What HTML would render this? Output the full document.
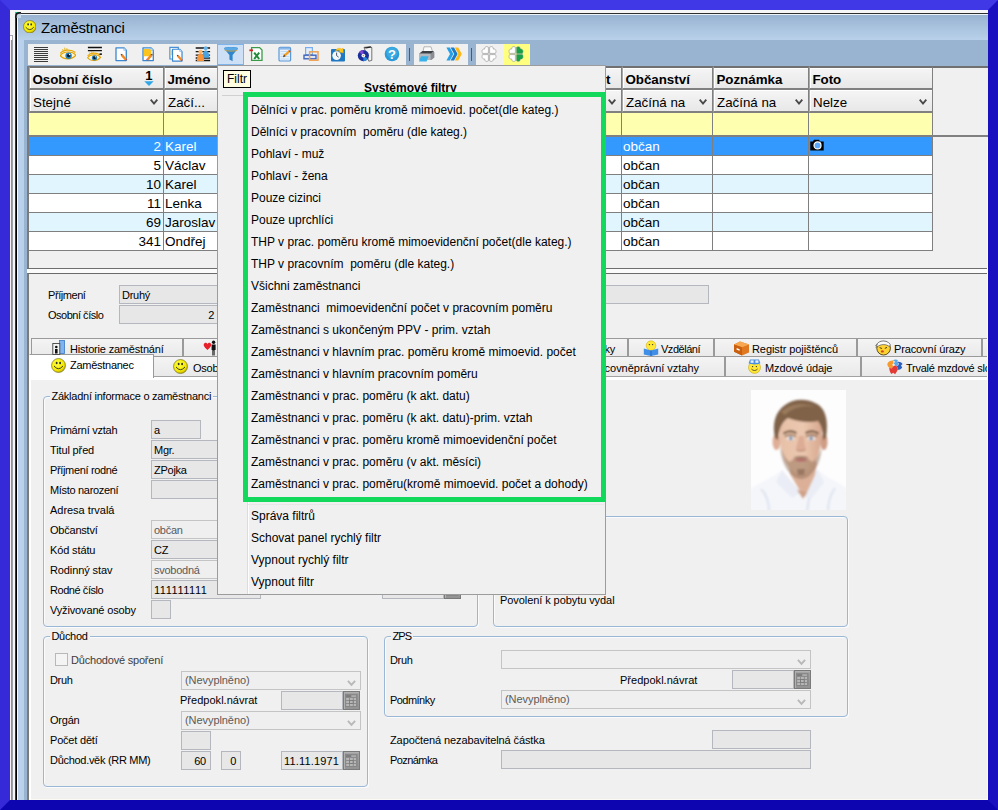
<!DOCTYPE html>
<html lang="cs">
<head>
<meta charset="utf-8">
<title>Zaměstnanci</title>
<style>
html,body{margin:0;padding:0}
body{width:998px;height:810px;position:relative;overflow:hidden;background:#f0f0f0;
 font-family:"Liberation Sans","DejaVu Sans",sans-serif;font-size:11px;color:#000}
div,span,svg{position:absolute;box-sizing:border-box}
.t{white-space:nowrap;line-height:1}
/* frame */
#frame{left:0;top:0;width:998px;height:810px;border-style:solid;border-width:10px;
 border-color:#4038e6 #1a10c0 #0c05b0 #3529d8;z-index:50;pointer-events:none}
#edgeR{left:987px;top:138px;width:1px;height:662px;background:#fbfbf3;z-index:49}
#edgeB{left:30px;top:799px;width:958px;height:1px;background:#fbfbf3;z-index:49}
/* outer window chrome */
#lwhite{left:10px;top:10px;width:6px;height:790px;background:#f6f6f6}
#twhite{left:10px;top:10px;width:978px;height:3px;background:#f6f6f6}
#lgrey{left:11px;top:39.5px;width:2px;height:761px;background:linear-gradient(90deg,#858a92,#a8acb2)}
#lfrag{left:10px;top:35px;width:3px;height:5px;background:#fff;border-top:1px solid #a4a8ae;border-right:1px solid #a4a8ae}
#lblack{left:15.2px;top:14px;width:1.9px;height:786px;background:linear-gradient(90deg,#6a6a6a,#000 55%)}
#lwl{left:17px;top:15px;width:1px;height:785px;background:#f6fafe;z-index:2}
#tblack{left:17px;top:12.6px;width:971px;height:1.6px;background:#2e2e2e}
#twhl{left:18px;top:14px;width:970px;height:1px;background:#eef4fa}
#corner{left:15.2px;top:12.4px;width:6px;height:6px;overflow:hidden;z-index:3}
#title{left:17px;top:15px;width:971px;height:25px;background:linear-gradient(#98b3d1,#b9d1ea)}
#lblue{left:17px;top:40px;width:7px;height:760px;background:#b9d1ea}
#dblue{left:24px;top:40px;width:964px;height:27px;background:#99b4d1}
#dblue2{left:24px;top:40px;width:4px;height:760px;background:#99b4d1}
#ttl{left:41px;top:20px;font-size:15px;letter-spacing:-0.2px}
.gh{background:linear-gradient(#f5f5f5,#e8e8e8);border:0 solid #808080;border-right-width:1px;border-left:1px solid #a8a8a8;box-shadow:inset 1px 1px 0 #fff}
.gr{font-size:13.5px}
.ghb{font-size:13.33px;font-weight:bold}
.ghf{font-size:13.33px}
.lb{font-size:11px;letter-spacing:-0.25px}
.gy{color:#5a5a5a}
.dk{color:#3c3c3c}
.in{background:#e7e7e7;border:1px solid #b4b8be}
.cb{background:#efefef;border:1px solid #c4c4c4}
.grp{border:1px solid #9bb7d6;border-radius:4px;box-shadow:inset 1px 1px 0 #fbfbfb,1px 1px 0 #fbfbfb}
.gt{background:#f0f0f0;padding:0 2px;margin-left:-1px}
.tab{background:linear-gradient(#f4f4f4,#e9e9e9);border:1px solid #9a9a9a;border-bottom:none}
.tabs{background:#fff;border:1px solid #9a9a9a;border-bottom:none;border-left-color:#fff}
.mi{font-size:12px;white-space:pre}
.mh{font-size:12px;font-weight:bold}

</style>
</head>
<body>
<div id="lwhite"></div><div id="twhite"></div><div id="lgrey"></div><div id="lfrag"></div>
<div id="lblack"></div><div id="lwl"></div><div id="tblack"></div><div id="twhl"></div>
<svg id="corner" width="6" height="6" viewBox="0 0 6 6"><rect width="6" height="6" fill="#00e2a4"/><path d="M0.900 6V4Q0.900 0.900 4 0.900H6V6Z" fill="#c6d8ec"/><path d="M0.900 6V4.500Q0.900 0.900 4.500 0.900H6" stroke="#1c1c1c" stroke-width="1.700" fill="none"/></svg>
<div id="title"></div><div id="lblue"></div><div id="dblue"></div><div id="dblue2"></div>
<svg id="smT" style="left:22.800px;top:19.700px" width="13.500" height="13.500" viewBox="0 0 14 14"><use href="#smiley"/></svg>
<span class="t" id="ttl">Zaměstnanci</span>

<div id="tb1" style="left:28px;top:44px;width:378px;height:21px;background:#f0f0f0"></div>
<div id="tb2" style="left:414px;top:44px;width:54px;height:21px;background:#f0f0f0"></div>
<div id="tb3" style="left:476px;top:44px;width:54px;height:21px;background:#f0f0f0"></div>
<div style="left:503px;top:44px;width:27px;height:21px;background:#ffff80"></div>
<div style="left:409px;top:48px;width:1px;height:13px;background:#4a5a70"></div>
<div style="left:471px;top:48px;width:1px;height:13px;background:#4a5a70"></div>
<div id="tbact" style="left:217px;top:44px;width:27px;height:21px;background:#cde0f5;border:1px solid #7eb4ea"></div>
<!-- 1 lines -->
<svg class="ic" style="left:33px;top:46px" width="16" height="16" viewBox="0 0 16 16"><path d="M1 1.5h14M1 3.5h14M1 5.5h14M1 7.5h14M1 9.5h14M1 11.5h14M1 13.5h14M1 15.5h14" stroke="#3c3c3c" stroke-width="1"/></svg>
<!-- 2 eye -->
<svg class="ic" style="left:60px;top:46px" width="16" height="16" viewBox="0 0 16 16"><use href="#eye"/></svg>
<!-- 3 eye + lines -->
<svg class="ic" style="left:87px;top:46px" width="16" height="16" viewBox="0 0 16 16"><g transform="translate(0.300,3.700) scale(0.840)"><use href="#eye"/></g><path d="M0.900 1.500h14M0.900 4.600h14" stroke="#111" stroke-width="1.300"/><rect x="12.500" y="7.300" width="2.400" height="1.700" fill="#222"/></svg>
<!-- 4 doc pencil -->
<svg class="ic" style="left:114px;top:46px" width="16" height="16" viewBox="0 0 16 16"><use href="#doc"/><use href="#pencil"/></svg>
<!-- 5 doc yellow -->
<svg class="ic" style="left:141px;top:46px" width="16" height="16" viewBox="0 0 16 16"><use href="#doc"/><path d="M3 3h5.800l1.600 1.600v5.600H3z" fill="#fcc41c"/><g transform="translate(18.300,0) scale(-1,1)"><use href="#pencil"/></g></svg>
<!-- 6 two docs -->
<svg class="ic" style="left:168px;top:46px" width="16" height="16" viewBox="0 0 16 16"><path d="M1.900 1.400h8.400v11.600H1.900z" fill="#fff" stroke="#4a90d4" stroke-width="1.200"/><path d="M2.700 4.200h1.500v5H2.700z" fill="#fcd860"/><g transform="translate(2.700,1.600) scale(0.920)"><use href="#doc"/><use href="#pencil"/></g></svg>
<!-- 7 people -->
<svg class="ic" style="left:195px;top:46px" width="16" height="16" viewBox="0 0 16 16"><path d="M0.700 2h14.400M0.700 5.600h14.400M0.700 9.200h14.400M0.700 12h14.400M0.700 14.500h14.400" stroke="#151515" stroke-width="1.300"/><circle cx="10.700" cy="2.300" r="2" fill="#6ab6ea"/><path d="M7.500 11.800c0-5 1.400-7.200 3.200-7.200s3.600 2.200 3.600 7.200z" fill="#4aa2de"/><circle cx="5.500" cy="5.800" r="2.100" fill="#ffb868"/><path d="M1.900 15c0-5 1.600-7.400 3.600-7.400s3.600 2.400 3.600 7.400z" fill="#f8943a"/></svg>
<!-- 8 funnel -->
<svg class="ic" style="left:223px;top:46px" width="16" height="16" viewBox="0 0 16 16"><path d="M1 2.6c0-2 14-2 14 0L9.6 9v6.200L6.400 13.400V9z" fill="#2f86cc"/><ellipse cx="8" cy="2.700" rx="7" ry="1.700" fill="#5aa8e4"/><path d="M1.6 4.200C4 5.400 12 5.400 14.400 4.200" stroke="#d8a840" stroke-width="0.900" fill="none"/></svg>
<!-- 9 excel -->
<svg class="ic" style="left:249px;top:46px" width="16" height="16" viewBox="0 0 16 16"><path d="M2.6 1.600h8l2.400 2.400v10.400H2.600z" fill="#fff" stroke="#3a9a48" stroke-width="1.300"/><path d="M5.200 6.600l5 6.400M10.200 6.600l-5 6.400" stroke="#1f8a38" stroke-width="2"/><rect x="0.400" y="3.400" width="3.600" height="1.800" fill="#d62020"/></svg>
<!-- 10 notepad -->
<svg class="ic" style="left:277px;top:46px" width="16" height="16" viewBox="0 0 16 16"><rect x="2" y="1.400" width="11.600" height="13.600" rx="1.300" fill="#e8f2fc" stroke="#5a98d8" stroke-width="1.200"/><path d="M3.400 5.500h9M3.400 8h9M3.400 10.500h9M3.400 13h9" stroke="#b4d2f0" stroke-width="0.800"/><rect x="2.600" y="1.600" width="10.400" height="2" fill="#8cb8e8"/><path d="M6 11.200l1-2.600 5.200-4.600 1.500 1.600-5.200 4.700z" fill="#f4a020"/><path d="M6 11.200l1-2.600 1.500 1.700z" fill="#5a3a1a"/><path d="M11.400 4.700l0.800-0.700 1.500 1.600-0.800 0.700z" fill="#d04040"/></svg>
<!-- 11 windows -->
<svg class="ic" style="left:303px;top:46px" width="16" height="16" viewBox="0 0 16 16"><rect x="2.600" y="1.600" width="6.800" height="7" fill="#e4effa" stroke="#78aef0" stroke-width="1.200"/><rect x="1" y="9.200" width="12" height="3.600" fill="#dfe8f8" stroke="#3f64c0" stroke-width="1.400"/><rect x="6.600" y="5.800" width="8.400" height="8.400" fill="none" stroke="#f0a050" stroke-width="1.500"/></svg>
<!-- 12 clock -->
<svg class="ic" style="left:330px;top:46px" width="16" height="16" viewBox="0 0 16 16"><rect x="1" y="3" width="14" height="12.400" rx="1" fill="#1f78c0"/><circle cx="6.600" cy="9.600" r="4.300" fill="#f4f8fc"/><path d="M6.600 6.600v3l2 1.500" stroke="#345" stroke-width="0.900" fill="none"/><path d="M5.400 5.200C6 2 10 1.400 11.600 3.200l1.500-1.200 0.300 5-4.700-0.900 1.400-1.200C9 3.800 7 4 5.400 5.200z" fill="#ffc820" stroke="#e09a00" stroke-width="0.400"/></svg>
<!-- 13 cd -->
<svg class="ic" style="left:357px;top:46px" width="16" height="16" viewBox="0 0 16 16"><path d="M7 1.400l6.600-0.800 1.200 1v12.800l-3 0.800z" fill="#f2f2f2" stroke="#555" stroke-width="0.800"/><path d="M7 1.400l6.600-0.800 1.200 1-6 0.900z" fill="#222"/><circle cx="6.400" cy="9.600" r="5.600" fill="#1a2f9a"/><path d="M6.400 9.600L2 6.200A5.600 5.600 0 0 1 6.400 4z" fill="#7a4ad0"/><path d="M6.400 9.600l4.400 3.400a5.600 5.600 0 0 1-4.400 2.200z" fill="#2a88d8"/><circle cx="6.400" cy="9.600" r="1.900" fill="#f4f4e8"/><circle cx="6.400" cy="9.600" r="0.700" fill="#888"/></svg>
<!-- 14 help -->
<svg class="ic" style="left:384px;top:46px" width="16" height="16" viewBox="0 0 16 16"><circle cx="8" cy="8" r="7.300" fill="#2a9ad8"/><circle cx="8" cy="6.600" r="5.600" fill="#48b4ea" opacity="0.600"/><text x="8" y="12.600" text-anchor="middle" font-family="Liberation Sans, sans-serif" font-weight="bold" font-size="13" fill="#fff">?</text></svg>
<!-- 15 printer -->
<svg class="ic" style="left:418px;top:46px" width="17" height="16" viewBox="0 0 17 16"><path d="M6 0.800h7l1.600 5H5z" fill="#fafafa" stroke="#999" stroke-width="0.700"/><path d="M1.400 7.600L4.600 5h11l0.800 1.400v5.200l-3 2.400H1.400z" fill="#8a8e94"/><path d="M1.400 7.600L4.600 5h11l-3 2.800z" fill="#3c3f44"/><path d="M1.400 7.600h11.200v6.400H1.400z" fill="#b4b8be"/><path d="M3 10.200h7.600l-2 5.200H1z" fill="#38b0e8"/></svg>
<!-- 16 chevrons -->
<svg class="ic" style="left:446px;top:46px" width="16" height="16" viewBox="0 0 16 16"><path d="M0.400 1.400h3.400l3.600 6.600-3.600 6.600H0.400L4 8z" fill="#28a0e8"/><path d="M4.600 1.400H8l3.600 6.600L8 14.600H4.600L8.200 8z" fill="#1c7cc8"/><path d="M8.800 1.400h3.400L15.800 8l-3.600 6.600H8.800L12.400 8z" fill="#fcb814"/></svg>
<!-- 17 clover white -->
<svg class="ic" style="left:481px;top:46px" width="16" height="16" viewBox="0 0 16 16"><use href="#clover" fill="#fff"/></svg>
<!-- 18 clover green -->
<svg class="ic" style="left:508px;top:46px" width="16" height="16" viewBox="0 0 16 16"><use href="#clover" fill="#fff"/><path d="M8.600 7.400V1.200c2.200-1.400 4 0 3.600 1.800 2.400-0.400 3.600 1.800 2.200 4.400zM8.600 8.600v6.200c2.200 1.400 4 0 3.600-1.800 2.400 0.400 3.600-1.800 2.200-4.400z" fill="#18a048"/></svg>

<div id="gridbg" style="left:27px;top:66px;width:961px;height:203px;background:#f0f0f0"></div>
<div style="left:27px;top:66px;width:961px;height:2px;background:#707070"></div>
<div style="left:27px;top:66px;width:2px;height:203px;background:#7b7b7b"></div>
<div class="gh" style="left:29px;top:66px;width:135px;height:24px;border-top:2px solid #707070;border-bottom:2px solid #808080"></div>
<div class="gh" style="left:29px;top:90px;width:135px;height:23px;border-bottom:2px solid #808080"></div>
<div style="left:29px;top:113px;width:135px;height:24px;background:#ffffb0;border-right:1px solid #808080;border-bottom:2px solid #808080"></div>
<div class="gh" style="left:164px;top:66px;width:458px;height:24px;border-top:2px solid #707070;border-bottom:2px solid #808080"></div>
<div class="gh" style="left:164px;top:90px;width:458px;height:23px;border-bottom:2px solid #808080"></div>
<div style="left:164px;top:113px;width:458px;height:24px;background:#ffffb0;border-right:1px solid #808080;border-bottom:2px solid #808080"></div>
<div class="gh" style="left:622px;top:66px;width:91px;height:24px;border-top:2px solid #707070;border-bottom:2px solid #808080"></div>
<div class="gh" style="left:622px;top:90px;width:91px;height:23px;border-bottom:2px solid #808080"></div>
<div style="left:622px;top:113px;width:91px;height:24px;background:#ffffb0;border-right:1px solid #808080;border-bottom:2px solid #808080"></div>
<div class="gh" style="left:713px;top:66px;width:96px;height:24px;border-top:2px solid #707070;border-bottom:2px solid #808080"></div>
<div class="gh" style="left:713px;top:90px;width:96px;height:23px;border-bottom:2px solid #808080"></div>
<div style="left:713px;top:113px;width:96px;height:24px;background:#ffffb0;border-right:1px solid #808080;border-bottom:2px solid #808080"></div>
<div class="gh" style="left:809px;top:66px;width:124px;height:24px;border-top:2px solid #707070;border-bottom:2px solid #808080"></div>
<div class="gh" style="left:809px;top:90px;width:124px;height:23px;border-bottom:2px solid #808080"></div>
<div style="left:809px;top:113px;width:124px;height:24px;background:#ffffb0;border-right:1px solid #808080;border-bottom:2px solid #808080"></div>
<div style="left:29px;top:137px;width:904px;height:19px;background:#3399ff;border-bottom:1px solid #7f7f7f"></div>
<span class="t gr" style="right:837px;top:140px;color:#fff">2</span>
<span class="t gr" style="left:165px;top:140px;color:#fff">Karel</span>
<span class="t gr" style="left:623px;top:140px;color:#fff">občan</span>
<div style="left:29px;top:156px;width:904px;height:19px;background:#fff;border-bottom:1px solid #7f7f7f"></div>
<span class="t gr" style="right:837px;top:159px;color:#000">5</span>
<span class="t gr" style="left:165px;top:159px;color:#000">Václav</span>
<span class="t gr" style="left:623px;top:159px;color:#000">občan</span>
<div style="left:29px;top:175px;width:904px;height:19px;background:#e1f5ff;border-bottom:1px solid #7f7f7f"></div>
<span class="t gr" style="right:837px;top:178px;color:#000">10</span>
<span class="t gr" style="left:165px;top:178px;color:#000">Karel</span>
<span class="t gr" style="left:623px;top:178px;color:#000">občan</span>
<div style="left:29px;top:194px;width:904px;height:19px;background:#fff;border-bottom:1px solid #7f7f7f"></div>
<span class="t gr" style="right:837px;top:197px;color:#000">11</span>
<span class="t gr" style="left:165px;top:197px;color:#000">Lenka</span>
<span class="t gr" style="left:623px;top:197px;color:#000">občan</span>
<div style="left:29px;top:213px;width:904px;height:19px;background:#e1f5ff;border-bottom:1px solid #7f7f7f"></div>
<span class="t gr" style="right:837px;top:216px;color:#000">69</span>
<span class="t gr" style="left:165px;top:216px;color:#000">Jaroslav</span>
<span class="t gr" style="left:623px;top:216px;color:#000">občan</span>
<div style="left:29px;top:232px;width:904px;height:19px;background:#fff;border-bottom:1px solid #7f7f7f"></div>
<span class="t gr" style="right:837px;top:235px;color:#000">341</span>
<span class="t gr" style="left:165px;top:235px;color:#000">Ondřej</span>
<span class="t gr" style="left:623px;top:235px;color:#000">občan</span>
<div style="left:163px;top:136px;width:1px;height:115px;background:#7f7f7f"></div>
<div style="left:621px;top:136px;width:1px;height:115px;background:#7f7f7f"></div>
<div style="left:712px;top:136px;width:1px;height:115px;background:#7f7f7f"></div>
<div style="left:808px;top:136px;width:1px;height:115px;background:#7f7f7f"></div>
<div style="left:932px;top:136px;width:1px;height:115px;background:#7f7f7f"></div>
<div style="left:29px;top:135px;width:959px;height:2px;background:#808080"></div>
<span class="t ghb" style="left:32.4px;top:72.500px">Osobní číslo</span>
<span class="t ghf" style="left:33px;top:95.500px">Stejné</span>
<svg style="left:150px;top:99px" width="8" height="6" viewBox="0 0 8 6"><path d="M0.700 0.700L4 4.600 7.300 0.700" stroke="#484848" stroke-width="1.800" fill="none"/></svg>
<span class="t ghb" style="left:167.4px;top:72.500px">Jméno</span>
<span class="t ghf" style="left:168px;top:95.500px">Začí...</span>
<svg style="left:608px;top:99px" width="8" height="6" viewBox="0 0 8 6"><path d="M0.700 0.700L4 4.600 7.300 0.700" stroke="#484848" stroke-width="1.800" fill="none"/></svg>
<span class="t ghb" style="left:625.4px;top:72.500px">Občanství</span>
<span class="t ghf" style="left:626px;top:95.500px">Začíná na</span>
<svg style="left:699px;top:99px" width="8" height="6" viewBox="0 0 8 6"><path d="M0.700 0.700L4 4.600 7.300 0.700" stroke="#484848" stroke-width="1.800" fill="none"/></svg>
<span class="t ghb" style="left:716.4px;top:72.500px">Poznámka</span>
<span class="t ghf" style="left:717px;top:95.500px">Začíná na</span>
<svg style="left:795px;top:99px" width="8" height="6" viewBox="0 0 8 6"><path d="M0.700 0.700L4 4.600 7.300 0.700" stroke="#484848" stroke-width="1.800" fill="none"/></svg>
<span class="t ghb" style="left:812.4px;top:72.500px">Foto</span>
<span class="t ghf" style="left:813px;top:95.500px">Nelze</span>
<svg style="left:919px;top:99px" width="8" height="6" viewBox="0 0 8 6"><path d="M0.700 0.700L4 4.600 7.300 0.700" stroke="#484848" stroke-width="1.800" fill="none"/></svg>
<span class="t ghb" style="left:606px;top:72.500px">t</span>
<svg style="left:144px;top:70px" width="10" height="17" viewBox="0 0 10 17"><text x="4.800" y="10.300" text-anchor="middle" font-family="Liberation Sans, sans-serif" font-weight="bold" font-size="13" fill="#000">1</text><path d="M0.300 11.200h9.400L5 16z" fill="#2fa6e8"/></svg>
<svg style="left:810px;top:139px" width="14" height="12" viewBox="0 0 14 12"><path d="M0.300 2.600h2.600L4 0.800h5l1.100 1.800h3.600v9H0.300z" fill="#000"/><circle cx="7.500" cy="6.400" r="3.500" fill="#58a8ff" stroke="#fff" stroke-width="1.200"/></svg>
<div style="left:29px;top:251px;width:959px;height:17px;background:#f0f0f0"></div>
<div style="left:27px;top:268px;width:961px;height:1.3px;background:#6e6e6e"></div>
<div style="left:27px;top:269.300px;width:961px;height:3.300px;background:#fbfbfb"></div>

<div id="formbg" style="left:27px;top:272.600px;width:961px;height:528px;background:#f0f0f0;border-top:1.800px solid #6a6a6a;border-left:2px solid #7b7b7b"></div>
<span class="t lb " style="left:48px;top:290px;letter-spacing:-0.434px;">Příjmení</span>
<span class="t lb " style="left:48px;top:310px;letter-spacing:-0.487px;">Osobní číslo</span>
<div class="in" style="left:119px;top:285px;width:590px;height:19px"></div>
<span class="t lb " style="left:122px;top:290.0px;">Druhý</span>
<div class="in" style="left:119px;top:305px;width:100px;height:19px"></div>
<span class="t lb " style="right:784px;top:310.0px;">2</span>
<div class="tab" style="left:31px;top:338px;width:152px;height:19px"></div>
<div class="tab" style="left:183px;top:338px;width:147px;height:19px"></div>
<div class="tab" style="left:500px;top:338px;width:128px;height:19px"></div>
<div class="tab" style="left:628px;top:338px;width:86px;height:19px"></div>
<div class="tab" style="left:714px;top:338px;width:143px;height:19px"></div>
<div class="tab" style="left:857px;top:338px;width:125px;height:19px"></div>
<div class="tab" style="left:982px;top:338px;width:118px;height:19px"></div>
<div class="tab" style="left:153px;top:356px;width:177px;height:21px;border-bottom:1px solid #a2a2a2"></div>
<div class="tab" style="left:500px;top:356px;width:225px;height:21px;border-bottom:1px solid #a2a2a2"></div>
<div class="tab" style="left:725px;top:356px;width:136px;height:21px;border-bottom:1px solid #a2a2a2"></div>
<div class="tab" style="left:861px;top:356px;width:239px;height:21px;border-bottom:1px solid #a2a2a2"></div>
<div style="left:29px;top:377px;width:959px;height:3px;background:#fff"></div>
<div style="left:29px;top:376px;width:2px;height:424px;background:#fff"></div>
<div class="tabs" style="left:29px;top:354px;width:125px;height:24px"></div>
<svg style="left:52px;top:340px" width="14" height="16" viewBox="0 0 14 16"><rect x="7.500" y="0.500" width="5" height="13" fill="#7fb4f0" stroke="#3a78c8" stroke-width="0.800"/><rect x="0.800" y="3.500" width="7" height="11" fill="#f4f4f4" stroke="#444" stroke-width="0.900"/><circle cx="4.300" cy="7" r="1.300" fill="#111"/><path d="M3 9h2.600v4.500H3z" fill="#111"/></svg>
<span class="t lb " style="left:70px;top:344px;letter-spacing:-0.190px;">Historie zaměstnání</span>
<svg style="left:203px;top:340px" width="15" height="16" viewBox="0 0 15 16"><path d="M4.500 10C0.500 6.500 0.200 4.500 1.200 3.400c1-1 2.600-0.600 3.300 0.800 0.700-1.400 2.300-1.800 3.300-0.800S8.500 6.500 4.500 10z" fill="#e8202a"/><circle cx="10.600" cy="2.200" r="1.700" fill="#111"/><path d="M8.600 4.400h4v5.600h-1v5.600h-0.900v-5h-0.400v5H9.400V10H8.600z" fill="#111"/></svg>
<svg style="left:51px;top:358px" width="15" height="15" viewBox="0 0 14 14"><use href="#smiley"/></svg>
<span class="t lb " style="left:70px;top:360px;letter-spacing:-0.269px;">Zaměstnanec</span>
<svg style="left:173px;top:359px" width="15" height="15" viewBox="0 0 14 14"><use href="#smiley"/></svg>
<span class="t lb " style="left:193px;top:362.5px;">Osobní</span>
<span class="t lb " style="right:383px;top:344px;">Průkazky</span>
<svg style="left:643px;top:340px" width="16" height="16" viewBox="0 0 16 16"><circle cx="8" cy="5.600" r="4.800" fill="#ffe838" stroke="#c8a800" stroke-width="0.500"/><circle cx="6.400" cy="4.600" r="0.700" fill="#333"/><circle cx="9.600" cy="4.600" r="0.700" fill="#333"/><path d="M0.800 8.600L8 10.400l7.200-1.800v6L8 16 0.800 14.600z" fill="#3f8ee8"/><path d="M8 10.400V16" stroke="#1c5cb0" stroke-width="0.800"/></svg>
<span class="t lb " style="left:661px;top:344px;letter-spacing:-0.477px;">Vzdělání</span>
<svg style="left:733px;top:340px" width="17" height="16" viewBox="0 0 17 16"><path d="M1 4.600L7 1.600l9 3v7.800l-7 3-8-3.600z" fill="#e07820"/><path d="M1 4.600L7 1.600l9 3-7 2.600z" fill="#f8a850"/><path d="M9 7.200v8.200l-8-3.600V4.600z" fill="#c86010"/><rect x="3.600" y="8.400" width="3" height="1.600" fill="#fff" transform="skewY(20) translate(0,-1.600)"/></svg>
<span class="t lb " style="left:752px;top:344px;letter-spacing:-0.080px;">Registr pojištěnců</span>
<svg style="left:874px;top:339px" width="18" height="17" viewBox="0 0 18 17"><circle cx="9.600" cy="9.200" r="6.800" fill="#ffd232" stroke="#4a3c10" stroke-width="0.900"/><path d="M2.600 5.400C5.400 1 12.600 0.600 16.200 5.200l-0.600 2.600C12 4.600 6.600 5 3 8z" fill="#fafafa" stroke="#555" stroke-width="0.700"/><path d="M1.200 6.800l2.600-1.600M1.600 8.400l2-0.800" stroke="#666" stroke-width="0.800"/><path d="M5.600 8.600l2.400 0.900M13 8.400l-2.200 1" stroke="#3a2c10" stroke-width="0.900"/><ellipse cx="8.400" cy="12.400" rx="1.500" ry="1.200" fill="#d04a2a"/></svg>
<span class="t lb " style="left:894px;top:344px;letter-spacing:-0.134px;">Pracovní úrazy</span>
<span class="t lb " style="right:299px;top:362.5px;letter-spacing:-0.019px;">Pracovněprávní vztahy</span>
<svg style="left:747px;top:358px" width="15" height="16" viewBox="0 0 15 16"><circle cx="7.500" cy="9.400" r="6" fill="#ffe838" stroke="#b89800" stroke-width="0.500"/><path d="M1.600 5.200L3 1.600h9l1.400 3.600c-3 1.600-9 1.600-11.800 0z" fill="#4a90e0"/><rect x="3.600" y="2.400" width="3" height="2.400" fill="#e8f0ff"/><rect x="8.400" y="2.400" width="3" height="2.400" fill="#e8f0ff"/><circle cx="5.600" cy="8.600" r="0.700" fill="#333"/><circle cx="9.400" cy="8.600" r="0.700" fill="#333"/><path d="M4.400 11c1.800 2 4.400 2 6.200 0" stroke="#333" stroke-width="0.800" fill="none"/></svg>
<span class="t lb " style="left:765px;top:362.5px;letter-spacing:-0.092px;">Mzdové údaje</span>
<svg style="left:886px;top:358px" width="18" height="18" viewBox="0 0 18 18"><path d="M1.500 5.500c1-2 3-3.200 5.400-3l0.800 2.800-1.600 1.500 1.300 1.400-1.800 2.200-2.300-0.700C1.800 8.800 1 7 1.500 5.500z" fill="#f59a2e"/><path d="M6.900 2.500c1.300-1.200 3.400-1.500 5-0.500l-0.700 2 1.500 1-1.200 2.300-2.400-0.400-1.400-1.600 1.600-1.500z" fill="#5aa8e6"/><path d="M11.200 4c2-0.600 4 0.200 5.400 2l-1.600 1.600 1.200 1.800c-1 1.500-2.600 2.400-4.300 2.300l-0.500-2.500-1.900-1.900 2.400 0.400 1.200-2.300z" fill="#2a5fc0"/><path d="M3.300 9.700l2.300 0.700 1.800-2.200 2.100-0.900 1.900 1.900 0.500 2.500c-1.200 1.200-1.400 3-2.800 4.600l-1.900-1.600-1.800 1.300C4.200 14.700 3.200 12.200 3.300 9.700z" fill="#e23a34"/></svg>
<span class="t lb " style="left:906px;top:362.5px;">Trvalé mzdové složky</span>
<div class="grp" style="left:43px;top:396px;width:435px;height:231px"></div>
<span class="t lb gt" style="left:50.5px;top:390.8px;letter-spacing:-0.248px;">Základní informace o zaměstnanci</span>
<span class="t lb " style="left:50px;top:425px;letter-spacing:-0.259px;">Primární vztah</span>
<span class="t lb " style="left:50px;top:445px;letter-spacing:-0.135px;">Titul před</span>
<span class="t lb " style="left:50px;top:465px;letter-spacing:-0.347px;">Příjmení rodné</span>
<span class="t lb " style="left:50px;top:485px;letter-spacing:-0.319px;">Místo narození</span>
<span class="t lb " style="left:50px;top:505px;letter-spacing:-0.032px;">Adresa trvalá</span>
<span class="t lb " style="left:50px;top:525px;letter-spacing:-0.226px;">Občanství</span>
<span class="t lb " style="left:50px;top:545px;letter-spacing:-0.132px;">Kód státu</span>
<span class="t lb " style="left:50px;top:565px;letter-spacing:-0.108px;">Rodinný stav</span>
<span class="t lb " style="left:50px;top:585px;letter-spacing:-0.436px;">Rodné číslo</span>
<span class="t lb " style="left:50px;top:605px;letter-spacing:-0.154px;">Vyživované osoby</span>
<div class="in" style="left:151px;top:420px;width:50px;height:19px"></div>
<span class="t lb " style="left:154px;top:425.0px;">a</span>
<div class="in" style="left:151px;top:440px;width:110px;height:19px"></div>
<span class="t lb " style="left:154px;top:445.0px;">Mgr.</span>
<div class="in" style="left:151px;top:460px;width:110px;height:19px"></div>
<span class="t lb " style="left:154px;top:465.0px;">ZPojka</span>
<div class="in" style="left:151px;top:480px;width:110px;height:19px"></div>
<div class="cb" style="left:151px;top:520px;width:110px;height:19px"></div>
<span class="t lb gy" style="left:154px;top:525.0px;">občan</span>
<div class="in" style="left:151px;top:540px;width:110px;height:19px"></div>
<span class="t lb " style="left:154px;top:545.0px;">CZ</span>
<div class="cb" style="left:151px;top:560px;width:110px;height:19px"></div>
<span class="t lb gy" style="left:154px;top:565.0px;">svobodná</span>
<div class="in" style="left:151px;top:580px;width:110px;height:19px"></div>
<span class="t lb " style="left:154px;top:585.0px;letter-spacing:0.552px;">111111111</span>
<div class="in" style="left:151px;top:600px;width:20px;height:19px"></div>
<div class="in" style="left:382px;top:580px;width:62px;height:19px"></div>
<div style="left:444px;top:580px;width:17px;height:19px;background:linear-gradient(#a4a4a4,#939393);border:1px solid #7a7a7a;box-shadow:inset 1px 1px 0 #b0b0b0"></div>
<svg style="left:446px;top:583px" width="13" height="13" viewBox="0 0 13 13"><rect x="0.500" y="0.500" width="11.600" height="12" fill="#8c8c8c" stroke="#808080" stroke-width="0.600"/><rect x="1.200" y="1.200" width="4.600" height="1.800" fill="#7c7c7c"/><rect x="6.400" y="1.200" width="4.600" height="1.800" fill="#ababab"/><g fill="#b6b6b6"><rect x="1.200" y="4" width="2.800" height="2"/><rect x="5" y="4" width="2.800" height="2"/><rect x="8.800" y="4" width="2.200" height="2"/><rect x="1.200" y="7" width="2.800" height="2"/><rect x="5" y="7" width="2.800" height="2"/><rect x="8.800" y="7" width="2.200" height="2"/><rect x="1.200" y="10" width="2.800" height="2"/><rect x="5" y="10" width="2.800" height="2"/><rect x="8.800" y="10" width="2.200" height="2"/></g><rect x="4.600" y="6.600" width="3.600" height="2.800" fill="none" stroke="#787878" stroke-width="0.700"/></svg>
<div class="grp" style="left:493px;top:516px;width:355px;height:111px"></div>
<span class="t lb " style="left:500px;top:595px;letter-spacing:-0.073px;">Povolení k pobytu vydal</span>
<svg id="photo" style="left:751px;top:390px" width="95" height="120" viewBox="0 0 95 120">
<defs>
<filter id="pb" x="-5%" y="-5%" width="110%" height="110%"><feGaussianBlur stdDeviation="0.9"/></filter>
<filter id="pb2" x="-20%" y="-20%" width="140%" height="140%"><feGaussianBlur stdDeviation="1.8"/></filter>
<linearGradient id="skin" x1="0" x2="1"><stop offset="0" stop-color="#e6bfa6"/><stop offset="0.55" stop-color="#ecc8b0"/><stop offset="1" stop-color="#d6a78e"/></linearGradient>
<clipPath id="pc"><rect width="95" height="120"/></clipPath>
</defs>
<rect width="95" height="120" fill="#fdfdfe"/>
<g clip-path="url(#pc)">
<g filter="url(#pb)">
<!-- shirt -->
<path d="M-2 100C8 92 22 88 31 80L50 104 66 79c8 8 20 12 31 20v24H-2z" fill="#f5f6fa"/>
<path d="M31 80l-6 12 16 16 9-6zM66 79l7 13-14 18-9-8z" fill="#eaedf5"/>
<path d="M10 99c6 6 8 14 8 22M84 98c-5 7-7 14-7 23M58 108l-2 14" stroke="#dde2ee" stroke-width="2" fill="none"/>
<!-- neck -->
<path d="M38 72h28l-2 13-10 22-5-6-10-17z" fill="#dcb098"/>
<path d="M46 100l6 9 4-7" fill="#cfa088"/>
<!-- ears -->
<ellipse cx="25.500" cy="52" rx="4" ry="8" fill="#dfae96"/>
<ellipse cx="73" cy="52" rx="3.500" ry="8" fill="#cf9c84"/>
<!-- face -->
<path d="M28 36c0-14 10-18 22-18s22 4 21 20c0 14-2 26-8 36-4 7-9 11-13 11s-10-4-14-11c-6-10-8-24-8-38z" fill="url(#skin)"/>
<!-- beard -->
<path d="M29 56c1 12 4 20 9 26 4 5 8 7 12 7s8-2 12-7c5-6 8-14 9-26-3 9-6 14-10 16-3-4-8-5-11-5s-8 1-11 5c-4-2-7-8-10-16z" fill="#94735a" opacity="0.520"/>
<path d="M42 68c3-3 13-3 16 0-3 1-13 1-16 0z" fill="#8a6650" opacity="0.600"/>
<path d="M46 79h8l-1 6h-6z" fill="#7a5a46" opacity="0.550"/>
<!-- mouth -->
<path d="M43.500 70c3-1.200 10-1.200 13 0-3 2-10 2-13 0z" fill="#b5686a"/>
<!-- nose -->
<path d="M48 46c-1 6-3 10-3 13 2 2 8 2 10 0-1-4-2-8-2-13z" fill="#dba892" opacity="0.900"/>
<path d="M45.500 60c2 1.400 7 1.400 9 0" stroke="#a87862" stroke-width="1" fill="none"/>
<!-- eyes -->
<ellipse cx="39.500" cy="48.500" rx="4" ry="1.800" fill="#f2ece8"/>
<ellipse cx="60.500" cy="48.500" rx="4" ry="1.800" fill="#f2ece8"/>
<circle cx="39.800" cy="48.500" r="1.800" fill="#5f8cb4"/>
<circle cx="60.200" cy="48.500" r="1.800" fill="#5f8cb4"/>
<path d="M34 46.500c3-2 8-2 11 0M55 46.500c3-2 8-2 11 0" stroke="#4a3626" stroke-width="1.100" fill="none"/>
<path d="M32.500 43.600c4-2.800 9-2.800 13-0.400M54.500 43.200c4-2.400 9-2.400 13 0.400" stroke="#6a4c34" stroke-width="2" fill="none"/>
<!-- hair -->
<path d="M24 48c-3-14 0-26 10-33 8-6 20-7 30-2 10 4 14 16 11 35l-3 2c0-8-1-14-5-19-8 2-20 1-30-3-6 4-9 10-10 22z" fill="#80624a"/>
<path d="M30 22c8-8 22-10 34-5-10-2-22 0-30 8z" fill="#9a7a5c"/>
</g>
</g>
</svg>

<div class="grp" style="left:43px;top:636px;width:325px;height:151px"></div>
<span class="t lb gt" style="left:50.5px;top:630.8px;letter-spacing:-0.320px;">Důchod</span>
<div style="left:55px;top:653px;width:13px;height:13px;background:#f4f4f4;border:1px solid #b8b8b8"></div>
<span class="t lb dk" style="left:71px;top:655px;letter-spacing:-0.200px;">Důchodové spoření</span>
<span class="t lb " style="left:50px;top:675px;letter-spacing:-0.336px;">Druh</span>
<div class="cb" style="left:181px;top:671px;width:180px;height:19px"></div>
<span class="t lb gy" style="left:185px;top:675.0px;letter-spacing:-0.068px;">(Nevyplněno)</span>
<svg style="left:347px;top:679.5px" width="9" height="7" viewBox="0 0 9 7"><path d="M0.900 0.900L4.500 4.900 8.100 0.900" stroke="#b8b8b8" stroke-width="1.900" fill="none"/></svg>
<span class="t lb " style="left:180px;top:695px;letter-spacing:0.024px;">Předpokl.návrat</span>
<div class="in" style="left:281px;top:691px;width:62px;height:19px"></div>
<div style="left:343px;top:691px;width:17px;height:19px;background:linear-gradient(#a4a4a4,#939393);border:1px solid #7a7a7a;box-shadow:inset 1px 1px 0 #b0b0b0"></div>
<svg style="left:345px;top:694px" width="13" height="13" viewBox="0 0 13 13"><rect x="0.500" y="0.500" width="11.600" height="12" fill="#8c8c8c" stroke="#808080" stroke-width="0.600"/><rect x="1.200" y="1.200" width="4.600" height="1.800" fill="#7c7c7c"/><rect x="6.400" y="1.200" width="4.600" height="1.800" fill="#ababab"/><g fill="#b6b6b6"><rect x="1.200" y="4" width="2.800" height="2"/><rect x="5" y="4" width="2.800" height="2"/><rect x="8.800" y="4" width="2.200" height="2"/><rect x="1.200" y="7" width="2.800" height="2"/><rect x="5" y="7" width="2.800" height="2"/><rect x="8.800" y="7" width="2.200" height="2"/><rect x="1.200" y="10" width="2.800" height="2"/><rect x="5" y="10" width="2.800" height="2"/><rect x="8.800" y="10" width="2.200" height="2"/></g><rect x="4.600" y="6.600" width="3.600" height="2.800" fill="none" stroke="#787878" stroke-width="0.700"/></svg>
<span class="t lb " style="left:50px;top:715px;letter-spacing:-0.236px;">Orgán</span>
<div class="cb" style="left:181px;top:711px;width:180px;height:19px"></div>
<span class="t lb gy" style="left:185px;top:715.0px;letter-spacing:-0.068px;">(Nevyplněno)</span>
<svg style="left:347px;top:719.5px" width="9" height="7" viewBox="0 0 9 7"><path d="M0.900 0.900L4.500 4.900 8.100 0.900" stroke="#b8b8b8" stroke-width="1.900" fill="none"/></svg>
<span class="t lb " style="left:50px;top:735px;letter-spacing:-0.195px;">Počet dětí</span>
<div class="in" style="left:181px;top:731px;width:30px;height:19px"></div>
<span class="t lb " style="left:50px;top:755px;letter-spacing:-0.297px;">Důchod.věk (RR MM)</span>
<div class="in" style="left:181px;top:751px;width:30px;height:19px"></div>
<span class="t lb " style="right:792px;top:756.0px;">60</span>
<div class="in" style="left:221px;top:751px;width:20px;height:19px"></div>
<span class="t lb " style="right:762px;top:756.0px;">0</span>
<div class="in" style="left:281px;top:751px;width:62px;height:19px"></div>
<span class="t lb " style="left:284px;top:756.0px;letter-spacing:0.158px;">11.11.1971</span>
<div style="left:343px;top:751px;width:17px;height:19px;background:linear-gradient(#a4a4a4,#939393);border:1px solid #7a7a7a;box-shadow:inset 1px 1px 0 #b0b0b0"></div>
<svg style="left:345px;top:754px" width="13" height="13" viewBox="0 0 13 13"><rect x="0.500" y="0.500" width="11.600" height="12" fill="#8c8c8c" stroke="#808080" stroke-width="0.600"/><rect x="1.200" y="1.200" width="4.600" height="1.800" fill="#7c7c7c"/><rect x="6.400" y="1.200" width="4.600" height="1.800" fill="#ababab"/><g fill="#b6b6b6"><rect x="1.200" y="4" width="2.800" height="2"/><rect x="5" y="4" width="2.800" height="2"/><rect x="8.800" y="4" width="2.200" height="2"/><rect x="1.200" y="7" width="2.800" height="2"/><rect x="5" y="7" width="2.800" height="2"/><rect x="8.800" y="7" width="2.200" height="2"/><rect x="1.200" y="10" width="2.800" height="2"/><rect x="5" y="10" width="2.800" height="2"/><rect x="8.800" y="10" width="2.200" height="2"/></g><rect x="4.600" y="6.600" width="3.600" height="2.800" fill="none" stroke="#787878" stroke-width="0.700"/></svg>
<div class="grp" style="left:384px;top:636px;width:464px;height:81px"></div>
<span class="t lb gt" style="left:391.5px;top:630.8px;letter-spacing:-0.935px;">ZPS</span>
<span class="t lb " style="left:390px;top:655px;letter-spacing:-0.336px;">Druh</span>
<div class="cb" style="left:501px;top:650px;width:310px;height:19px"></div>
<svg style="left:797px;top:658.5px" width="9" height="7" viewBox="0 0 9 7"><path d="M0.900 0.900L4.500 4.900 8.100 0.900" stroke="#b8b8b8" stroke-width="1.900" fill="none"/></svg>
<span class="t lb " style="left:620px;top:675px;letter-spacing:0.024px;">Předpokl.návrat</span>
<div class="in" style="left:732px;top:670px;width:62px;height:19px"></div>
<div style="left:794px;top:670px;width:17px;height:19px;background:linear-gradient(#a4a4a4,#939393);border:1px solid #7a7a7a;box-shadow:inset 1px 1px 0 #b0b0b0"></div>
<svg style="left:796px;top:673px" width="13" height="13" viewBox="0 0 13 13"><rect x="0.500" y="0.500" width="11.600" height="12" fill="#8c8c8c" stroke="#808080" stroke-width="0.600"/><rect x="1.200" y="1.200" width="4.600" height="1.800" fill="#7c7c7c"/><rect x="6.400" y="1.200" width="4.600" height="1.800" fill="#ababab"/><g fill="#b6b6b6"><rect x="1.200" y="4" width="2.800" height="2"/><rect x="5" y="4" width="2.800" height="2"/><rect x="8.800" y="4" width="2.200" height="2"/><rect x="1.200" y="7" width="2.800" height="2"/><rect x="5" y="7" width="2.800" height="2"/><rect x="8.800" y="7" width="2.200" height="2"/><rect x="1.200" y="10" width="2.800" height="2"/><rect x="5" y="10" width="2.800" height="2"/><rect x="8.800" y="10" width="2.200" height="2"/></g><rect x="4.600" y="6.600" width="3.600" height="2.800" fill="none" stroke="#787878" stroke-width="0.700"/></svg>
<span class="t lb " style="left:390px;top:695px;letter-spacing:-0.540px;">Podmínky</span>
<div class="cb" style="left:501px;top:690px;width:310px;height:19px"></div>
<span class="t lb gy" style="left:505px;top:694.0px;letter-spacing:-0.068px;">(Nevyplněno)</span>
<svg style="left:797px;top:698.5px" width="9" height="7" viewBox="0 0 9 7"><path d="M0.900 0.900L4.500 4.900 8.100 0.900" stroke="#b8b8b8" stroke-width="1.900" fill="none"/></svg>
<span class="t lb " style="left:390px;top:735px;letter-spacing:-0.103px;">Započtená nezabavitelná částka</span>
<div class="in" style="left:712px;top:730px;width:99px;height:19px"></div>
<span class="t lb " style="left:390px;top:755px;letter-spacing:-0.573px;">Poznámka</span>
<div class="in" style="left:501px;top:750px;width:310px;height:19px"></div>

<div id="menu" style="left:217px;top:65px;width:389px;height:530px;background:#f0f0f0;border:1px solid #9c9c9c"></div>
<div style="left:246.500px;top:502px;width:1px;height:92px;background:#dcdcdc"></div>
<div style="left:247.500px;top:502px;width:1px;height:92px;background:#fdfdfd"></div>
<div style="left:222px;top:95px;width:22px;height:1px;background:#d0d0d0"></div>
<div style="left:248px;top:504px;width:356px;height:1px;background:#e7e7e7"></div>
<span class="t mh" style="left:364px;top:82px">Systémové filtry</span>
<div id="green" style="left:243px;top:92px;width:363px;height:410px;border:5px solid #12d95b;background:#f0f0f0"></div>
<span class="t mi" style="left:251px;top:103.5px">Dělníci v prac. poměru kromě mimoevid. počet(dle kateg.)</span>
<span class="t mi" style="left:251px;top:125.5px">Dělníci v pracovním  poměru (dle kateg.)</span>
<span class="t mi" style="left:251px;top:147.5px">Pohlaví - muž</span>
<span class="t mi" style="left:251px;top:169.5px">Pohlaví - žena</span>
<span class="t mi" style="left:251px;top:191.5px">Pouze cizinci</span>
<span class="t mi" style="left:251px;top:213.5px">Pouze uprchlíci</span>
<span class="t mi" style="left:251px;top:235.5px">THP v prac. poměru kromě mimoevidenční počet(dle kateg.)</span>
<span class="t mi" style="left:251px;top:257.5px">THP v pracovním  poměru (dle kateg.)</span>
<span class="t mi" style="left:251px;top:279.5px">Všichni zaměstnanci</span>
<span class="t mi" style="left:251px;top:301.5px">Zaměstnanci  mimoevidenční počet v pracovním poměru</span>
<span class="t mi" style="left:251px;top:323.5px">Zaměstnanci s ukončeným PPV - prim. vztah</span>
<span class="t mi" style="left:251px;top:345.5px">Zaměstnanci v hlavním prac. poměru kromě mimoevid. počet</span>
<span class="t mi" style="left:251px;top:367.5px">Zaměstnanci v hlavním pracovním poměru</span>
<span class="t mi" style="left:251px;top:389.5px">Zaměstnanci v prac. poměru (k akt. datu)</span>
<span class="t mi" style="left:251px;top:411.5px">Zaměstnanci v prac. poměru (k akt. datu)-prim. vztah</span>
<span class="t mi" style="left:251px;top:433.5px">Zaměstnanci v prac. poměru kromě mimoevidenční počet</span>
<span class="t mi" style="left:251px;top:455.5px">Zaměstnanci v prac. poměru (v akt. měsíci)</span>
<span class="t mi" style="left:251px;top:477.5px">Zaměstnanci v prac. poměru(kromě mimoevid. počet a dohody)</span>
<span class="t mi" style="left:251px;top:509.5px">Správa filtrů</span>
<span class="t mi" style="left:251px;top:531.5px">Schovat panel rychlý filtr</span>
<span class="t mi" style="left:251px;top:553.5px">Vypnout rychlý filtr</span>
<span class="t mi" style="left:251px;top:575.5px">Vypnout filtr</span>
<div id="tip" style="left:223px;top:70px;width:28px;height:18px;background:#ffffe1;border:1px solid #000"></div>
<span class="t mi" style="left:227px;top:73px">Filtr</span>


<div id="edgeR"></div><div id="edgeB"></div>
<div id="frame"></div>

<svg width="0" height="0" style="left:-10px;top:-10px">
<defs>
<radialGradient id="smg" cx="0.4" cy="0.35" r="0.7"><stop offset="0" stop-color="#ffff40"/><stop offset="0.7" stop-color="#f4e800"/><stop offset="1" stop-color="#b8a800"/></radialGradient>
<g id="smiley"><circle cx="7" cy="7" r="6.5" fill="url(#smg)" stroke="#6a6420" stroke-width="0.6"/><ellipse cx="5.3" cy="4.6" rx="0.9" ry="1.2" fill="#333"/><ellipse cx="8.5" cy="4.6" rx="0.9" ry="1.2" fill="#333"/><path d="M2.8 7.4Q7 12.6 11.2 7.4" stroke="#333" stroke-width="0.9" fill="none"/></g>
<g id="eye"><path d="M0.300 9.600C3 5.400 12 4.400 15.800 9.200 12 14 4 14 0.300 9.600z" fill="#fdf4d8" stroke="#e2a200" stroke-width="1.200"/><path d="M0.400 7.400C3 3.600 11 2.600 15.400 6.600" stroke="#e8aa00" stroke-width="1.300" fill="none"/><path d="M4.400 1.600l0.800 2.600M2.400 3.200l1.400 2M6.800 2.200l0.200 1.800" stroke="#e8aa00" stroke-width="0.800"/><circle cx="8.600" cy="9.700" r="3.200" fill="#2b7fb4"/><circle cx="8.600" cy="9.600" r="1.700" fill="#0c141c"/><circle cx="9.600" cy="8.500" r="0.800" fill="#fff"/></g>
<g id="doc"><path d="M2 1.800h7.800l2.500 2.500v10.300H2z" fill="#fff" stroke="#3b88d0" stroke-width="1.300" stroke-linejoin="round"/><path d="M9.800 1.800v2.500h2.500" fill="#cfe4f8" stroke="#7ab0e4" stroke-width="0.600"/></g>
<g id="pencil"><path d="M6.990 9.940L8.790 8.360 12.600 12.700 10.800 14.280z" fill="#f08a24"/><path d="M6.700 7.800L8.790 8.360 6.990 9.940z" fill="#6a4a2a"/><path d="M12.600 12.700L13.210 13.390 11.410 14.970 10.800 14.280z" fill="#d84040"/></g>
<g id="clover"><path d="M7.400 7.400V1.200C5.200-0.200 3.400 1.200 3.800 3 1.400 2.600 0.200 4.800 1.600 7.400zM8.600 7.400V1.200c2.200-1.400 4 0 3.600 1.800 2.400-0.400 3.600 1.800 2.200 4.400zM7.400 8.600v6.200c-2.200 1.400-4 0-3.600-1.800-2.400 0.400-3.600-1.800-2.200-4.400zM8.600 8.600v6.200c2.200 1.400 4 0 3.600-1.800 2.400 0.400 3.600-1.800 2.200-4.400z" stroke="#9a9a9a" stroke-width="0.700"/></g>
</defs>
</svg>
</body>
</html>
